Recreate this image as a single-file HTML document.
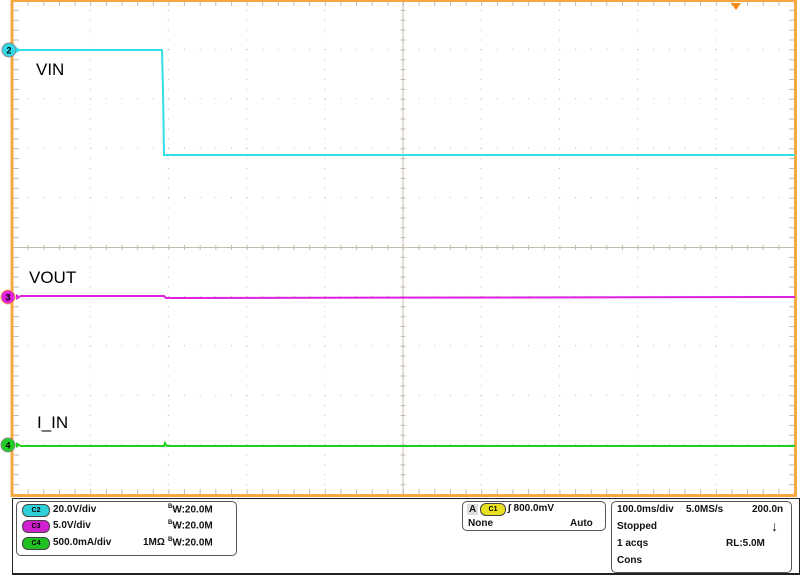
<!DOCTYPE html>
<html><head><style>
body{margin:0;width:800px;height:575px;background:#fff;overflow:hidden;font-family:"Liberation Sans",sans-serif;position:relative}
.t{position:absolute;font-size:10px;font-weight:bold;color:#111;white-space:nowrap}
.box{position:absolute;border:1px solid #555;border-radius:5px}
.pill{position:absolute;width:26px;height:11px;border-radius:6px;font-size:7px;text-align:center;line-height:11px;font-weight:bold;border:1px solid #444}
.lbl{position:absolute;font-size:17px;color:#000}
</style></head><body>
<svg width="800" height="575" style="position:absolute;left:0;top:0">
<g stroke="#c4bcae" stroke-width="1">
<g stroke-dasharray="1 8.88">
<line x1="90.2" y1="0" x2="90.2" y2="495"/><line x1="168.4" y1="0" x2="168.4" y2="495"/><line x1="246.6" y1="0" x2="246.6" y2="495"/><line x1="324.8" y1="0" x2="324.8" y2="495"/><line x1="481.2" y1="0" x2="481.2" y2="495"/><line x1="559.4" y1="0" x2="559.4" y2="495"/><line x1="637.6" y1="0" x2="637.6" y2="495"/><line x1="715.8" y1="0" x2="715.8" y2="495"/>
</g>
<g stroke-dasharray="1 14.64">
<line x1="12" y1="49.4" x2="795" y2="49.4"/><line x1="12" y1="98.8" x2="795" y2="98.8"/><line x1="12" y1="148.2" x2="795" y2="148.2"/><line x1="12" y1="197.6" x2="795" y2="197.6"/><line x1="12" y1="296.4" x2="795" y2="296.4"/><line x1="12" y1="345.8" x2="795" y2="345.8"/><line x1="12" y1="395.2" x2="795" y2="395.2"/><line x1="12" y1="444.6" x2="795" y2="444.6"/>
</g>
<line x1="403" y1="0" x2="403" y2="495"/>
<line x1="12" y1="247.5" x2="795" y2="247.5"/>
<line x1="403" y1="0" x2="403" y2="495" stroke-width="5" stroke-dasharray="1 8.88"/>
<line x1="12" y1="247.5" x2="795" y2="247.5" stroke-width="5" stroke-dasharray="1 14.64"/>
<line x1="12" y1="3" x2="795" y2="3" stroke-width="6" stroke-dasharray="1 14.64"/>
<line x1="12" y1="492" x2="795" y2="492" stroke-width="6" stroke-dasharray="1 14.64"/>
<line x1="16" y1="0" x2="16" y2="495" stroke-width="6" stroke-dasharray="1 8.88"/>
<line x1="792" y1="0" x2="792" y2="495" stroke-width="6" stroke-dasharray="1 8.88"/>
</g>
<rect x="12" y="0.5" width="783.5" height="495" fill="none" stroke="#f5a940" stroke-width="3"/>
<path d="M731 3 L741 3 L736 10 Z" fill="#f58a10"/>
<path d="M20 50 L162 50 L163 90 L164 155 L795 155" fill="none" stroke="#30e0e8" stroke-width="2"/>
<path d="M20 296 L164 296 L166 298 L795 297" fill="none" stroke="#e020e0" stroke-width="2"/>
<path d="M20 446 L164 446 L165 443 L167 446 L795 446" fill="none" stroke="#20d020" stroke-width="2"/>
<circle cx="9" cy="50" r="7" fill="#30d8e8" stroke="#888"/><path d="M16 47 L21 50 L16 53Z" fill="#30d8e8"/>
<circle cx="8" cy="297" r="7" fill="#e020e0" stroke="#f5a940"/><path d="M16 294 L21 297 L16 300Z" fill="#e020e0"/>
<circle cx="8" cy="445" r="7" fill="#20d020" stroke="#888"/><path d="M16 442 L21 445 L16 448Z" fill="#20d020"/>
<text x="9" y="53.5" font-size="9" text-anchor="middle" font-family="Liberation Sans" font-weight="bold">2</text>
<text x="8" y="300.5" font-size="9" text-anchor="middle" font-family="Liberation Sans" font-weight="bold">3</text>
<text x="8" y="448.5" font-size="9" text-anchor="middle" font-family="Liberation Sans" font-weight="bold">4</text>
</svg>
<div class="lbl" style="left:36px;top:60px">VIN</div>
<div class="lbl" style="left:29px;top:268px">VOUT</div>
<div class="lbl" style="left:37px;top:413px">I_IN</div>
<div style="position:absolute;left:12px;top:498px;width:786px;height:74px;border:1px solid #222;border-bottom:2px solid #222"></div>
<div class="box" style="left:16px;top:501px;width:219px;height:53px"></div>
<div class="pill" style="left:22px;top:504px;background:#30d0d8">C2</div>
<div class="pill" style="left:22px;top:520px;background:#d020d0">C3</div>
<div class="pill" style="left:22px;top:537px;background:#20c020">C4</div>
<div class="t" style="left:53px;top:504px">20.0V/div</div>
<div class="t" style="left:53px;top:520px">5.0V/div</div>
<div class="t" style="left:53px;top:537px">500.0mA/div</div>
<div class="t" style="left:143px;top:537px">1MΩ</div>
<div class="t" style="left:168px;top:504px"><sup style="font-size:6px">B</sup>W:20.0M</div>
<div class="t" style="left:168px;top:520px"><sup style="font-size:6px">B</sup>W:20.0M</div>
<div class="t" style="left:168px;top:537px"><sup style="font-size:6px">B</sup>W:20.0M</div>
<div class="box" style="left:462px;top:501px;width:142px;height:28px"></div>
<div class="t" style="left:467px;top:504px;background:#ddd;padding:0 2px">A</div>
<div class="pill" style="left:480px;top:503px;background:#e8e020;width:24px">C1</div>
<div class="t" style="left:508px;top:503px">∫ 800.0mV</div>
<div class="t" style="left:468px;top:518px">None</div>
<div class="t" style="left:570px;top:518px">Auto</div>
<div class="box" style="left:611px;top:501px;width:179px;height:70px"></div>
<div class="t" style="left:617px;top:504px">100.0ms/div</div>
<div class="t" style="left:686px;top:504px">5.0MS/s</div>
<div class="t" style="left:752px;top:504px">200.0n</div>
<div class="t" style="left:617px;top:521px">Stopped</div>
<div class="t" style="left:771px;top:518px;font-size:14px">↓</div>
<div class="t" style="left:617px;top:538px">1 acqs</div>
<div class="t" style="left:726px;top:538px">RL:5.0M</div>
<div class="t" style="left:617px;top:555px">Cons</div>
</body></html>
